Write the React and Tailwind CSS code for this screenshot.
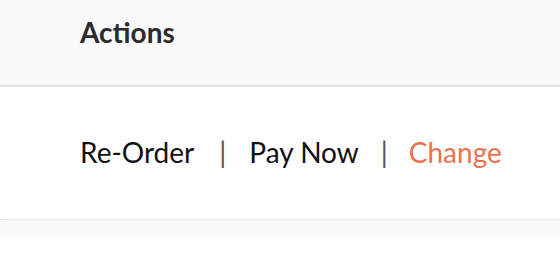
export default function App() {
  return (
    <div className="w-[560px] h-[280px] bg-white font-['Lato','Liberation_Sans',sans-serif]">
      <div className="h-[87px] bg-[#f9f9f9] border-b-2 border-[#e2e2e6] pl-[80px] pt-[18px]">
        <h2 className="text-[28px] leading-none font-bold text-[#2b2b2b]">Actions</h2>
      </div>
      <div className="h-[132px] flex items-start pl-[80px] pt-[51px] text-[28px] leading-none text-[#111]">
        <button className="hover:underline">Re-Order</button>
        <span className="ml-[25px] mr-[23px] text-[#555]">|</span>
        <button className="hover:underline">Pay Now</button>
        <span className="ml-[22px] mr-[21px] text-[#555]">|</span>
        <button className="text-[#ec7150] hover:underline">Change</button>
      </div>
      <div className="h-[12px] bg-[#f8f8f8] border-t border-dotted border-[#dddddd]" />
      <div className="h-[8px] bg-gradient-to-b from-[#f8f8f8] to-white" />
    </div>
  );
}
